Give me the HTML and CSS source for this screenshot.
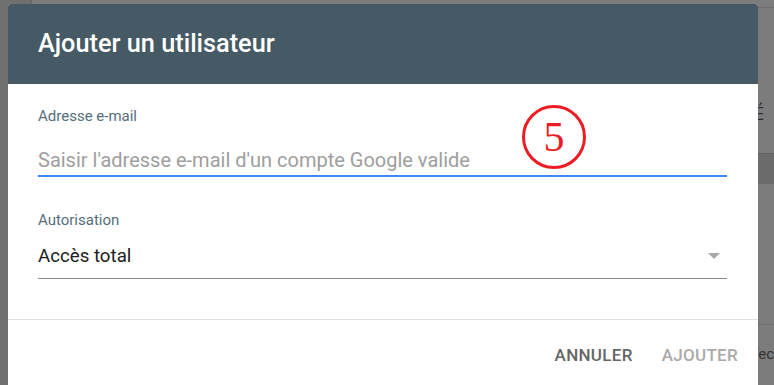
FILE: index.html
```html
<!DOCTYPE html>
<html lang="fr">
<head>
<meta charset="utf-8">
<title>Ajouter un utilisateur</title>
<link rel="stylesheet" href="styles.css">
</head>
<body>
<div class="page">
  <div class="page-left"></div>
  <div class="page-right">
    <div class="band band-top"></div>
    <div class="cell-e">É</div>
    <div class="band band-dark"></div>
    <div class="band band-mid"></div>
    <div class="cell-fec">fec</div>
  </div>
</div>
<div class="dialog">
  <div class="dialog-header">
    <h1 class="dialog-title">Ajouter un utilisateur</h1>
  </div>
  <div class="dialog-body">
    <div class="field">
      <label class="field-label">Adresse e-mail</label>
      <div class="field-input field-input--focused">
        <span class="placeholder">Saisir l'adresse e-mail d'un compte Google valide</span>
      </div>
    </div>
    <div class="field field--select">
      <label class="field-label">Autorisation</label>
      <div class="field-input field-input--select">
        <span class="value">Accès total</span>
        <span class="arrow"></span>
      </div>
    </div>
  </div>
  <div class="dialog-footer">
    <span class="btn btn-cancel">Annuler</span>
    <span class="btn btn-add">Ajouter</span>
  </div>
</div>
<div class="annotation"><span>5</span></div>
</body>
</html>
```

FILE: styles.css
```css
html, body {
  margin: 0;
  padding: 0;
  width: 774px;
  height: 385px;
  overflow: hidden;
  background: #7b7b7b;
  font-family: Roboto, "Liberation Sans", Arial, sans-serif;
}

.page {
  display: flex;
  width: 774px;
  height: 385px;
}

.page-left {
  width: 36px;
  height: 100%;
  background: #6f6f6f;
  border-right: 1px solid #666;
}

.page-right {
  flex: 1;
  display: flex;
  flex-direction: column;
  background: #7c7c7c;
}

.band-top {
  height: 7px;
  border-bottom: 1px solid #6d6d6d;
}

.cell-e {
  height: 145px;
  box-sizing: border-box;
  padding: 94px 0 0 722px;
  font-size: 18px;
  line-height: 22px;
  color: #2e2e2e;
  font-family: "Open Sans", "Liberation Sans", sans-serif;
  white-space: nowrap;
}

.band-dark {
  height: 30px;
  background: #6c6c6c;
  border-top: 1px solid #626262;
}

.band-mid {
  height: 140px;
  border-bottom: 1px solid #6e6e6e;
}

.cell-fec {
  padding: 20px 0 0 721px;
  font-size: 15px;
  color: #333;
  line-height: 18px;
  white-space: nowrap;
}

.dialog {
  position: absolute;
  left: 8px;
  top: 4px;
  width: 750px;
  height: 400px;
  background: #fff;
  border-radius: 3px 3px 0 0;
  display: flex;
  flex-direction: column;
}

.dialog-header {
  height: 80px;
  background: #455a64;
  border-radius: 3px 3px 0 0;
  box-sizing: border-box;
  padding: 25px 30px 0;
}

.dialog-title {
  margin: 0;
  font-size: 25.3px;
  line-height: 30px;
  font-weight: 500;
  color: #fff;
}

.dialog-body {
  padding: 24px 31px 0 30px;
  height: 236px;
  box-sizing: border-box;
  border-bottom: 1px solid #e0e0e0;
}

.field-label {
  display: block;
  font-size: 15px;
  line-height: 16px;
  color: #546e7a;
}

.field-input {
  margin-top: 24px;
  display: flex;
  align-items: center;
  justify-content: space-between;
  font-size: 18.7px;
  line-height: 24px;
}

.field-input--focused {
  padding-bottom: 3px;
  border-bottom: 2px solid #4285f4;
}

.placeholder {
  color: #9e9e9e;
  font-size: 20px;
}

.field--select {
  margin-top: 35px;
}

.field-input--select {
  margin-top: 16px;
  padding-bottom: 10px;
  border-bottom: 1px solid #8a8a8a;
}

.value {
  color: #212121;
}

.arrow {
  width: 0;
  height: 0;
  margin-right: 7px;
  border-left: 6px solid transparent;
  border-right: 6px solid transparent;
  border-top: 6px solid #a8a8a8;
}

.dialog-footer {
  display: flex;
  justify-content: flex-end;
  gap: 29px;
  padding: 24px 20px 0 0;
}

.btn {
  font-size: 17px;
  line-height: 22px;
  font-weight: 500;
  letter-spacing: 0.3px;
  text-transform: uppercase;
}

.btn-cancel {
  color: #666;
}

.btn-add {
  color: #aaa;
}

.annotation {
  position: absolute;
  left: 522px;
  top: 105px;
  width: 58px;
  height: 58px;
  border: 3px solid #ed1c24;
  border-radius: 50%;
  display: flex;
  align-items: center;
  justify-content: center;
}

.annotation span {
  font-family: "Liberation Serif", "Times New Roman", serif;
  font-size: 42px;
  line-height: 42px;
  color: #ed1c24;
}
```
